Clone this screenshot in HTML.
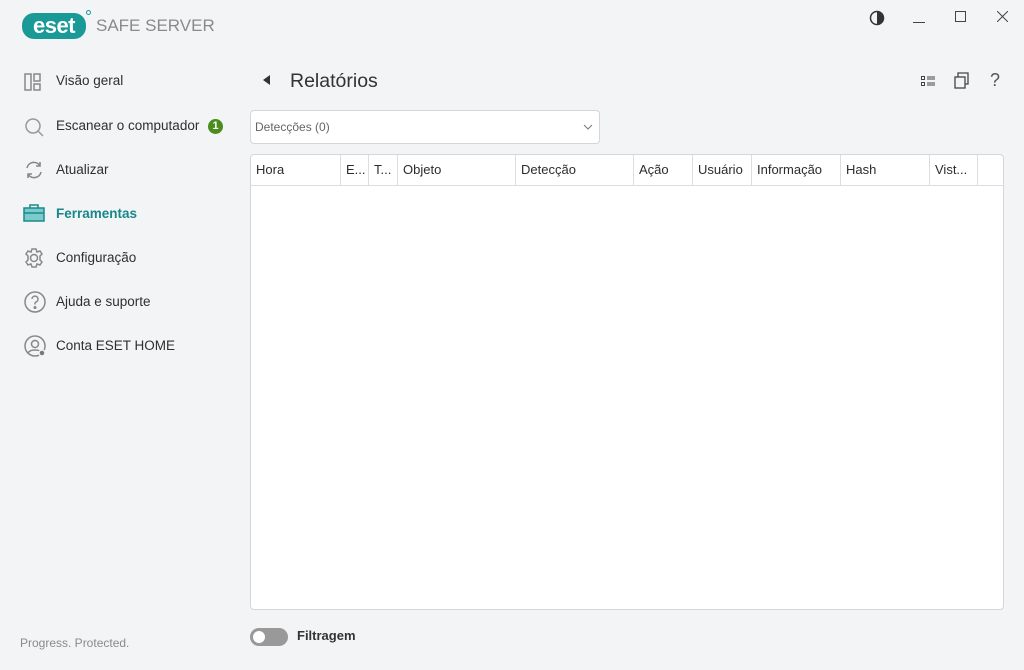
<!DOCTYPE html><html><head><style>
*{margin:0;padding:0;box-sizing:border-box}
body{width:1024px;height:670px;background:#f3f4f6;font-family:"Liberation Sans",sans-serif;color:#2c2c2c;position:relative;overflow:hidden;font-size:14px}
.a{position:absolute}
.nav{position:absolute;left:56px;font-size:13.5px;color:#2f2f2f}
.ic{position:absolute;left:23px}
.th{position:absolute;top:155px;height:30px;line-height:30px;font-size:13px;padding-left:5px;border-right:1px solid #ddd;white-space:nowrap;overflow:hidden}
</style></head><body>
<div class="a" style="left:22px;top:13px;width:64px;height:26px;background:#1a9a97;border-radius:12px;color:#fff;font-weight:bold;font-size:22px;line-height:25px;text-align:center;letter-spacing:-0.5px">eset</div>
<div class="a" style="left:86px;top:10px;width:5px;height:5px;border-radius:50%;border:1px solid #1a9a97"></div>
<div class="a" style="left:96px;top:16px;font-size:17px;color:#8a8a8a">SAFE SERVER</div>
<svg class="a" style="left:868px;top:9px" width="18" height="18"><circle cx="9" cy="9" r="6.5" fill="none" stroke="#333" stroke-width="1.5"/><path d="M9 2.5a6.5 6.5 0 0 1 0 13z" fill="#333"/></svg>
<div class="a" style="left:913px;top:22px;width:12px;height:1px;background:#444"></div>
<div class="a" style="left:955px;top:11px;width:11px;height:11px;border:1px solid #444"></div>
<svg class="a" style="left:997px;top:11px" width="11" height="11"><path d="M0 0L11 11M11 0L0 11" stroke="#444"/></svg>
<svg class="ic" style="top:72px" width="20" height="20" fill="none" stroke="#888" stroke-width="1.5"><rect x="2" y="2" width="6" height="16"/><rect x="11" y="2" width="6" height="7"/><rect x="11" y="12" width="6" height="6"/></svg>
<div class="nav" style="top:73px">Visão geral</div>
<svg class="ic" style="top:116px" width="22" height="22" fill="none" stroke="#999" stroke-width="1.5"><circle cx="10" cy="10" r="7"/><path d="M15 15l5 5"/></svg>
<div class="nav" style="top:118px">Escanear o computador</div>
<div class="a" style="left:208px;top:119px;width:15px;height:15px;border-radius:50%;background:#4b8d1c;color:#fff;font-size:11px;font-weight:bold;text-align:center;line-height:15px">1</div>
<svg class="ic" style="top:159px" width="22" height="22" fill="none" stroke="#888" stroke-width="1.6"><path d="M4 9a7 7 0 0 1 13-2M18 13a7 7 0 0 1-13 2M17 3v4h-4M5 19v-4h4"/></svg>
<div class="nav" style="top:162px">Atualizar</div>
<svg class="ic" style="top:203px" width="22" height="20" fill="#7ccbcc" stroke="#1a8a8a" stroke-width="1.5"><rect x="1" y="5" width="20" height="13"/><path d="M7 5V2h8v3M1 10h20" fill="none"/></svg>
<div class="nav" style="top:206px;color:#17878a;font-weight:bold">Ferramentas</div>
<svg class="ic" style="top:247px" width="22" height="22" fill="none" stroke="#888" stroke-width="1.5"><circle cx="11" cy="11" r="3.5"/><path d="M9 2h4l1 3 3-1 2 3-2 2v4l2 2-2 3-3-1-1 3H9l-1-3-3 1-2-3 2-2V9L3 7l2-3 3 1z"/></svg>
<div class="nav" style="top:250px">Configuração</div>
<svg class="ic" style="top:290px" width="24" height="24" fill="none" stroke="#888" stroke-width="1.5"><circle cx="12" cy="12" r="10"/><path d="M9 9a3 3 0 1 1 4 3c-1 .5-1 1-1 2.5"/><circle cx="12" cy="17.5" r=".8" fill="#888"/></svg>
<div class="nav" style="top:294px">Ajuda e suporte</div>
<svg class="ic" style="top:334px" width="24" height="24" fill="none" stroke="#888" stroke-width="1.5"><circle cx="12" cy="12" r="10"/><circle cx="12" cy="10" r="3.5"/><path d="M5 19c2-4 12-4 14 0"/><circle cx="19" cy="19" r="3" fill="#777" stroke="#f3f4f6"/></svg>
<div class="nav" style="top:338px">Conta ESET HOME</div>
<div class="a" style="left:20px;top:636px;font-size:12px;color:#8a8a8a">Progress. Protected.</div>
<svg class="a" style="left:263px;top:75px" width="8" height="10"><path d="M7 0v10L0 5z" fill="#333"/></svg>
<div class="a" style="left:290px;top:70px;font-size:19.5px;color:#333">Relatórios</div>
<svg class="a" style="left:921px;top:76px" width="15" height="11" fill="none" stroke="#444"><rect x=".5" y=".5" width="3" height="3"/><rect x=".5" y="6.5" width="3" height="3"/><path d="M6 1h8M6 3h8M6 7h8M6 9h8"/></svg>
<svg class="a" style="left:954px;top:72px" width="16" height="17" fill="none" stroke="#444" stroke-width="1.3"><rect x="1" y="5" width="10" height="11"/><path d="M4 5V1h10v11h-3"/></svg>
<div class="a" style="left:990px;top:70px;font-size:18px;color:#555">?</div>
<div class="a" style="left:250px;top:110px;width:350px;height:34px;background:#fff;border:1px solid #d4d6d9;border-radius:4px"></div>
<div class="a" style="left:255px;top:120px;font-size:12px;color:#666">Detecções (0)</div>
<svg class="a" style="left:583px;top:124px" width="10" height="6"><path d="M1 1l4 4 4-4" fill="none" stroke="#777"/></svg>
<div class="a" style="left:250px;top:154px;width:754px;height:456px;background:#fff;border:1px solid #d4d6d9;border-radius:4px"></div>
<div class="a" style="left:251px;top:185px;width:752px;height:1px;background:#ddd"></div>
<div class="th" style="left:251px;width:90px">Hora</div>
<div class="th" style="left:341px;width:28px">E...</div>
<div class="th" style="left:369px;width:29px">T...</div>
<div class="th" style="left:398px;width:118px">Objeto</div>
<div class="th" style="left:516px;width:118px">Detecção</div>
<div class="th" style="left:634px;width:59px">Ação</div>
<div class="th" style="left:693px;width:59px">Usuário</div>
<div class="th" style="left:752px;width:89px">Informação</div>
<div class="th" style="left:841px;width:89px">Hash</div>
<div class="th" style="left:930px;width:48px">Vist...</div>
<div class="a" style="left:250px;top:628px;width:38px;height:18px;border-radius:9px;background:#999"></div>
<div class="a" style="left:253px;top:631px;width:12px;height:12px;border-radius:50%;background:#fff"></div>
<div class="a" style="left:297px;top:628px;font-size:13px;font-weight:bold;color:#333">Filtragem</div>
</body></html>
